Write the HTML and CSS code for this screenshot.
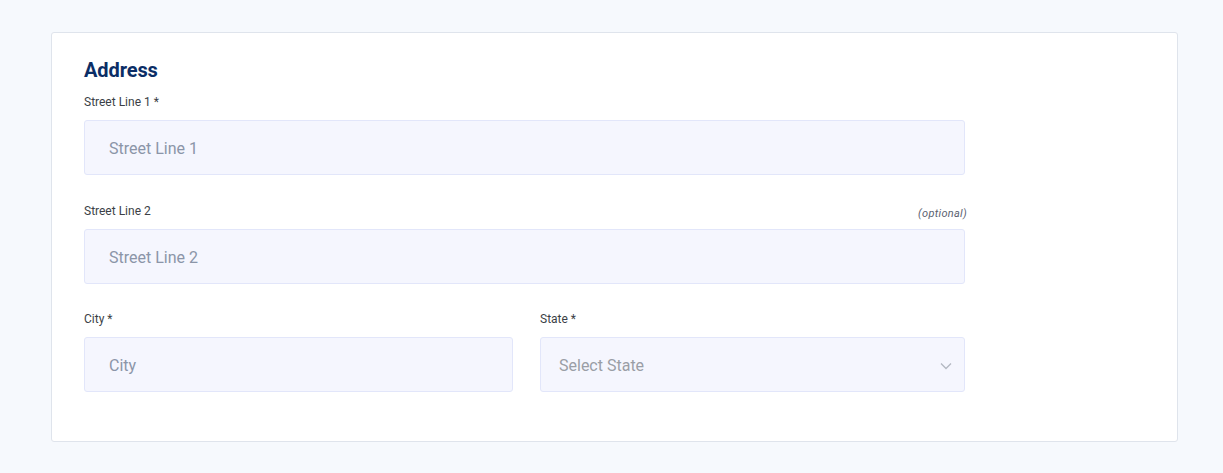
FILE: index.html
```html
<!DOCTYPE html>
<html>
<head>
<meta charset="utf-8">
<link rel="stylesheet" href="styles.css">
</head>
<body>
<div class="page">
  <section class="card">
    <form class="form">
      <h2 class="title">Address</h2>
      <div class="field">
        <div class="label-row"><label class="label">Street Line 1 *</label></div>
        <div class="input">Street Line 1</div>
      </div>
      <div class="field field-2">
        <div class="label-row"><label class="label">Street Line 2</label><span class="optional">(optional)</span></div>
        <div class="input">Street Line 2</div>
      </div>
      <div class="row">
        <div class="field">
          <div class="label-row"><label class="label">City *</label></div>
          <div class="input">City</div>
        </div>
        <div class="field">
          <div class="label-row"><label class="label">State *</label></div>
          <div class="input select">Select State
            <svg class="chev" width="12" height="8" viewBox="0 0 12 8"><path d="M1 1.5 L6 6.5 L11 1.5" fill="none" stroke="#b3b8c2" stroke-width="1.3"/></svg>
          </div>
        </div>
      </div>
    </form>
  </section>
</div>
</body>
</html>
```
FILE: styles.css
```css
html, body {
  margin: 0;
  padding: 0;
  background: #f6f9fd;
  font-family: Roboto, "Liberation Sans", sans-serif;
}
.page {
  padding: 32px 45px 32px 51px;
}
.card {
  background: #ffffff;
  border: 1px solid #dfe4ec;
  border-radius: 3px;
  padding: 25px 33px 49px 32px;
  height: 410px;
  box-sizing: border-box;
}
.form {
  width: 881px;
  display: flex;
  flex-direction: column;
}
.title {
  margin: 0 0 12px 0;
  font-size: 20px;
  line-height: 24px;
  font-weight: 700;
  color: #0b2e66;
  letter-spacing: -0.1px;
}
.field {
  display: flex;
  flex-direction: column;
  margin-bottom: 28px;
}
.field-2 {
  margin-bottom: 27px;
}
.label-row {
  display: flex;
  justify-content: space-between;
  align-items: flex-end;
  height: 16px;
  margin-bottom: 10px;
}
.label {
  font-size: 12px;
  line-height: 16px;
  color: #3b3f46;
}
.optional {
  font-size: 11px;
  font-style: italic;
  color: #5a6170;
  line-height: 14px;
  margin-right: -2px;
  margin-bottom: -2px;
  letter-spacing: 0.3px;
}
.input {
  height: 55px;
  box-sizing: border-box;
  background: #f5f6fe;
  border: 1px solid #e2e6fa;
  border-radius: 3px;
  padding: 0 24px;
  display: flex;
  align-items: center;
  font-size: 16px;
  color: #8b95a8;
  padding-top: 2px;
}
.row {
  display: grid;
  grid-template-columns: 429px 425px;
  column-gap: 27px;
}
.row .field {
  margin-bottom: 0;
}
.select {
  justify-content: space-between;
  padding: 2px 12px 0 18px;
  color: #9a9ea6;
}
.chev {
  display: block;
}
```
